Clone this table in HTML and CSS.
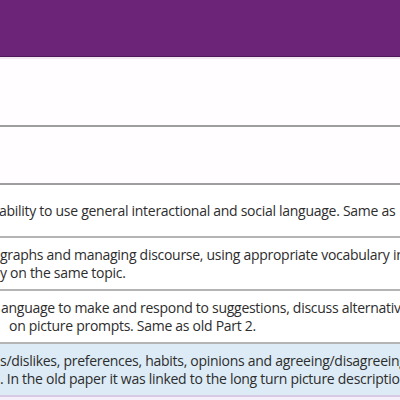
FILE: index.html
```html
<!DOCTYPE html>
<html lang="en">
<head>
<meta charset="utf-8">
<link rel="stylesheet" href="styles.css">
</head>
<body>
<div class="page">
  <div class="header"></div>
  <div class="band band-top"></div>
  <div class="band band-mid"></div>
  <div class="row">
    <div class="line l1">ability to use general interactional and social language. Same as</div>
  </div>
  <div class="row">
    <div class="line l2">graphs and managing discourse, using appropriate vocabulary in a</div>
    <div class="line l3">y on the same topic.</div>
  </div>
  <div class="row">
    <div class="line l4">anguage to make and respond to suggestions, discuss alternatives</div>
    <div class="line l5">on picture prompts. Same as old Part 2.</div>
  </div>
  <div class="row row-blue">
    <div class="line l6">s/dislikes, preferences, habits, opinions and agreeing/disagreeing</div>
    <div class="line l7">. In the old paper it was linked to the long turn picture description</div>
  </div>
  <div class="footer"></div>
</div>
</body>
</html>
```
FILE: styles.css
```css
html, body {
  margin: 0;
  padding: 0;
  background: #ffffff;
}
body {
  width: 400px;
  height: 400px;
  overflow: hidden;
  font-family: "Open Sans", "Noto Sans", sans-serif;
  color: #2d2d2d;
}
.page {
  display: flex;
  flex-direction: column;
}
.header {
  height: 56px;
  background: #6c2479;
  border-bottom: 1px solid #4e1858;
}
.band {
  background: #fffdff;
}
.band-top {
  height: 66px;
  border-top: 2px solid #f1e8f3;
  border-bottom: 2px solid #9e9e9e;
}
.band-mid {
  height: 56px;
  border-bottom: 2px solid #9e9e9e;
}
.row {
  height: 51px;
  display: flex;
  flex-direction: column;
  justify-content: center;
  border-bottom: 2px solid #b4b4b4;
  background: #ffffff;
}
.row-blue {
  background: #dcebf5;
  border-bottom: 2px solid #d6cbe3;
}
.line {
  font-size: 14px;
  line-height: 18px;
  letter-spacing: -0.28px;
  white-space: nowrap;
}
.l1 { margin-left: -1px; }
.l2 { margin-left: 0; }
.l3 { margin-left: 0; }
.l4 { margin-left: 1px; }
.l5 { margin-left: 9px; }
.l6 { margin-left: 0; }
.l7 { margin-left: 0; }
.footer {
  height: 20px;
  background: #f4eff8;
}
```
